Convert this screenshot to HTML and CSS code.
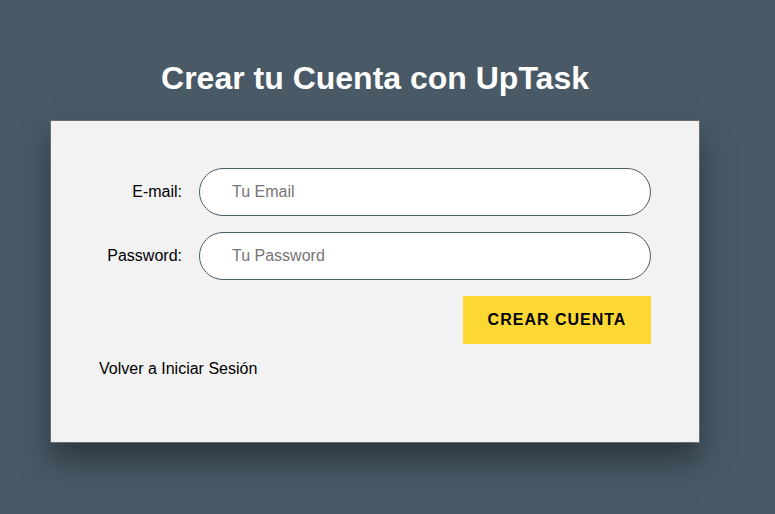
FILE: index.html
```html
<!DOCTYPE html>
<html lang="es">
<head>
<meta charset="utf-8">
<title>Crear Cuenta - UpTask</title>
<link rel="stylesheet" href="styles.css">
</head>
<body>
<main class="page">
  <h1 class="title">Crear tu Cuenta con UpTask</h1>
  <form class="card">
    <div class="field">
      <label class="label" for="email">E-mail:</label>
      <input class="input" id="email" type="email" placeholder="Tu Email">
    </div>
    <div class="field">
      <label class="label" for="password">Password:</label>
      <input class="input" id="password" type="password" placeholder="Tu Password">
    </div>
    <div class="actions">
      <button class="btn" type="button">Crear Cuenta</button>
    </div>
    <a class="link" href="#">Volver a Iniciar Sesión</a>
  </form>
</main>
</body>
</html>
```

FILE: styles.css
```css
html, body {
  margin: 0;
  padding: 0;
}
body {
  background: #495a66;
  font-family: "Liberation Sans", Arial, sans-serif;
  font-size: 16px;
  color: #000;
  height: 514px;
  overflow: hidden;
}
.page {
  width: 650px;
  margin: 0 0 0 50px;
  padding-top: 61px;
}
.title {
  margin: 0 0 24px;
  text-align: center;
  color: #fff;
  font-size: 32px;
  font-weight: 700;
  line-height: 35px;
}
.card {
  box-sizing: border-box;
  height: 323px;
  background: #f2f2f2;
  border: 1px solid #6e6e6e;
  padding: 47px 48px 47px 48px;
  box-shadow: 0 18px 28px rgba(20, 28, 34, 0.55);
  display: flex;
  flex-direction: column;
  gap: 16px;
}
.field {
  display: grid;
  grid-template-columns: 83px 1fr;
  column-gap: 17px;
  align-items: center;
}
.label {
  text-align: right;
}
.input {
  box-sizing: border-box;
  height: 48px;
  border: 1px solid #4c5d68;
  border-radius: 24px;
  background: #fff;
  padding: 0 32px;
  font-family: inherit;
  font-size: 16px;
  outline: none;
}
.input::placeholder {
  color: #757575;
}
.actions {
  display: flex;
  justify-content: flex-end;
}
.btn {
  height: 48px;
  width: 188px;
  border: 0;
  background: #fdd835;
  font-family: inherit;
  font-size: 16px;
  font-weight: 700;
  text-transform: uppercase;
  letter-spacing: 1px;
  color: #000;
  cursor: pointer;
}
.link {
  color: #000;
  text-decoration: none;
  line-height: 18px;
}
```
